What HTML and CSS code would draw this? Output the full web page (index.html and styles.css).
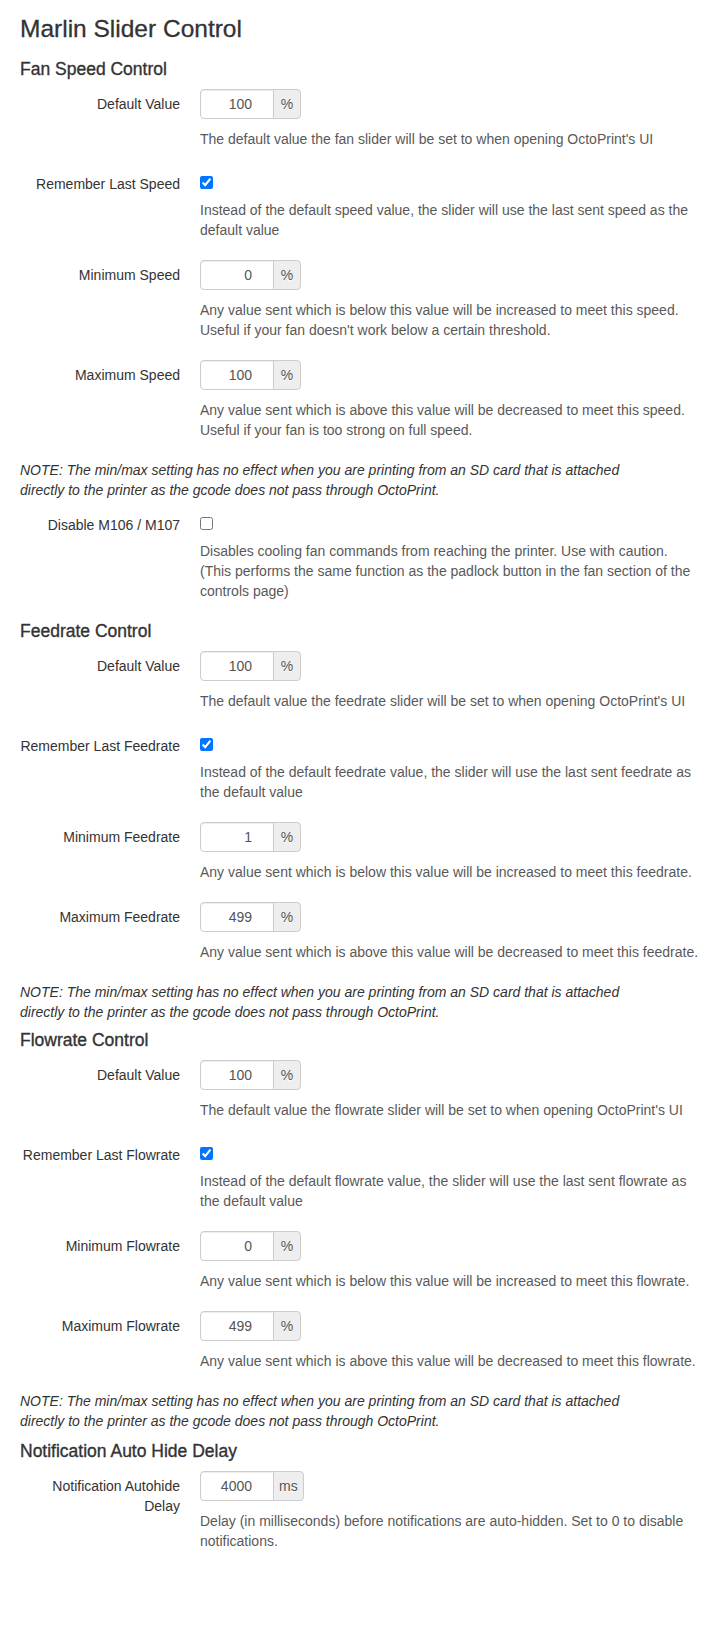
FILE: index.html
```html
<!DOCTYPE html>
<html>
<head>
<meta charset="utf-8">
<link rel="stylesheet" href="styles.css">
</head>
<body>
<div class="page">
  <h3 class="title">Marlin Slider Control</h3>

  <h4 class="section">Fan Speed Control</h4>
  <div class="group">
    <label class="label">Default Value</label>
    <div class="controls">
      <div class="append"><input class="num" type="text" value="100"><span class="addon">%</span></div>
      <p class="help">The default value the fan slider will be set to when opening OctoPrint's UI</p>
    </div>
  </div>
  <div class="group">
    <label class="label">Remember Last Speed</label>
    <div class="controls">
      <div class="check-line"><input type="checkbox" class="check" checked></div>
      <p class="help">Instead of the default speed value, the slider will use the last sent speed as the default value</p>
    </div>
  </div>
  <div class="group">
    <label class="label">Minimum Speed</label>
    <div class="controls">
      <div class="append"><input class="num" type="text" value="0"><span class="addon">%</span></div>
      <p class="help">Any value sent which is below this value will be increased to meet this speed. Useful if your fan doesn't work below a certain threshold.</p>
    </div>
  </div>
  <div class="group">
    <label class="label">Maximum Speed</label>
    <div class="controls">
      <div class="append"><input class="num" type="text" value="100"><span class="addon">%</span></div>
      <p class="help">Any value sent which is above this value will be decreased to meet this speed. Useful if your fan is too strong on full speed.</p>
    </div>
  </div>
  <p class="note">NOTE: The min/max setting has no effect when you are printing from an SD card that is attached<br>directly to the printer as the gcode does not pass through OctoPrint.</p>
  <div class="group">
    <label class="label">Disable M106 / M107</label>
    <div class="controls">
      <div class="check-line"><input type="checkbox" class="check"></div>
      <p class="help">Disables cooling fan commands from reaching the printer. Use with caution. (This performs the same function as the padlock button in the fan section of the controls page)</p>
    </div>
  </div>

  <h4 class="section">Feedrate Control</h4>
  <div class="group">
    <label class="label">Default Value</label>
    <div class="controls">
      <div class="append"><input class="num" type="text" value="100"><span class="addon">%</span></div>
      <p class="help">The default value the feedrate slider will be set to when opening OctoPrint's UI</p>
    </div>
  </div>
  <div class="group">
    <label class="label">Remember Last Feedrate</label>
    <div class="controls">
      <div class="check-line"><input type="checkbox" class="check" checked></div>
      <p class="help">Instead of the default feedrate value, the slider will use the last sent feedrate as the default value</p>
    </div>
  </div>
  <div class="group">
    <label class="label">Minimum Feedrate</label>
    <div class="controls">
      <div class="append"><input class="num" type="text" value="1"><span class="addon">%</span></div>
      <p class="help">Any value sent which is below this value will be increased to meet this feedrate.</p>
    </div>
  </div>
  <div class="group">
    <label class="label">Maximum Feedrate</label>
    <div class="controls">
      <div class="append"><input class="num" type="text" value="499"><span class="addon">%</span></div>
      <p class="help">Any value sent which is above this value will be decreased to meet this feedrate.</p>
    </div>
  </div>
  <p class="note note-close">NOTE: The min/max setting has no effect when you are printing from an SD card that is attached<br>directly to the printer as the gcode does not pass through OctoPrint.</p>

  <h4 class="section after-note">Flowrate Control</h4>
  <div class="group">
    <label class="label">Default Value</label>
    <div class="controls">
      <div class="append"><input class="num" type="text" value="100"><span class="addon">%</span></div>
      <p class="help">The default value the flowrate slider will be set to when opening OctoPrint's UI</p>
    </div>
  </div>
  <div class="group">
    <label class="label">Remember Last Flowrate</label>
    <div class="controls">
      <div class="check-line"><input type="checkbox" class="check" checked></div>
      <p class="help">Instead of the default flowrate value, the slider will use the last sent flowrate as the default value</p>
    </div>
  </div>
  <div class="group">
    <label class="label">Minimum Flowrate</label>
    <div class="controls">
      <div class="append"><input class="num" type="text" value="0"><span class="addon">%</span></div>
      <p class="help">Any value sent which is below this value will be increased to meet this flowrate.</p>
    </div>
  </div>
  <div class="group">
    <label class="label">Maximum Flowrate</label>
    <div class="controls">
      <div class="append"><input class="num" type="text" value="499"><span class="addon">%</span></div>
      <p class="help">Any value sent which is above this value will be decreased to meet this flowrate.</p>
    </div>
  </div>
  <p class="note">NOTE: The min/max setting has no effect when you are printing from an SD card that is attached<br>directly to the printer as the gcode does not pass through OctoPrint.</p>

  <h4 class="section after-note">Notification Auto Hide Delay</h4>
  <div class="group">
    <label class="label">Notification Autohide Delay</label>
    <div class="controls">
      <div class="append"><input class="num" type="text" value="4000"><span class="addon">ms</span></div>
      <p class="help">Delay (in milliseconds) before notifications are auto-hidden. Set to 0 to disable notifications.</p>
    </div>
  </div>
</div>
</body>
</html>
```

FILE: styles.css
```css
html, body {
  margin: 0;
  padding: 0;
  background: #fff;
}
body {
  font-family: "Liberation Sans", Arial, sans-serif;
  font-size: 14px;
  line-height: 20px;
  color: #333;
}
.page {
  padding: 0 6px 40px 20px;
}
.title {
  margin: 9px 0 10px 0;
  font-size: 24.5px;
  line-height: 40px;
  font-weight: normal;
  color: #333;
  -webkit-text-stroke: 0.3px #333;
}
.section {
  margin: 10px 0;
  font-size: 17.5px;
  line-height: 20px;
  font-weight: normal;
  color: #333;
  -webkit-text-stroke: 0.35px #333;
}
.group + .section {
  margin-top: 0;
}
.section.after-note {
  margin-top: 0;
}
.group {
  display: grid;
  grid-template-columns: 160px 1fr;
  column-gap: 20px;
  margin-bottom: 20px;
}
.label {
  display: block;
  padding-top: 5px;
  text-align: right;
  line-height: 20px;
  color: #333;
}
.controls {
  min-width: 0;
}
.append {
  display: flex;
  align-items: stretch;
  height: 30px;
}
.num {
  box-sizing: border-box;
  width: 74px;
  height: 30px;
  margin: 0;
  padding: 4px 21px 4px 6px;
  font-family: "Liberation Sans", Arial, sans-serif;
  font-size: 14px;
  line-height: 20px;
  color: #555;
  text-align: right;
  background: #fff;
  border: 1px solid #ccc;
  border-radius: 4px 0 0 4px;
  box-shadow: inset 0 1px 1px rgba(0,0,0,0.075);
  outline: none;
}
.addon {
  box-sizing: border-box;
  min-width: 28px;
  height: 30px;
  margin-left: -1px;
  padding: 4px 5px;
  font-size: 14px;
  line-height: 20px;
  text-align: center;
  color: #555;
  background: #eee;
  border: 1px solid #ccc;
  border-radius: 0 4px 4px 0;
  text-shadow: 0 1px 0 #fff;
}
.check-line {
  height: 21px;
  box-sizing: border-box;
  padding-top: 7px;
}
.check {
  display: block;
  width: 13px;
  height: 13px;
  margin: 0;
}
.help {
  margin: 10px 0 0 0;
  color: #595959;
  line-height: 20px;
}
.note {
  margin: 0 0 10px 0;
  font-style: italic;
  color: #333;
}
.note.note-close {
  margin-bottom: 8px;
}
```
